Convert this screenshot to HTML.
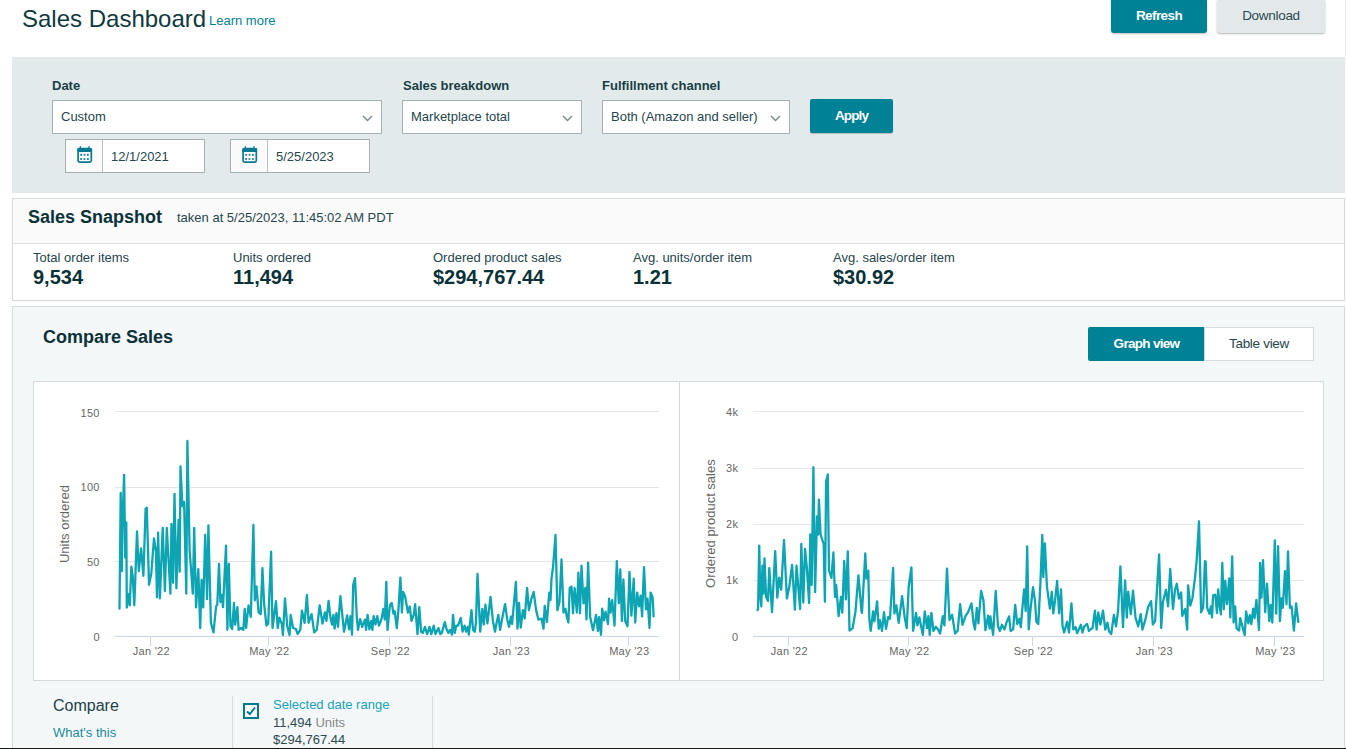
<!DOCTYPE html>
<html><head><meta charset="utf-8">
<style>
*{box-sizing:border-box;margin:0;padding:0}
html,body{width:1346px;height:749px;overflow:hidden;background:#fff;font-family:"Liberation Sans",sans-serif;color:#002F36}
.abs{position:absolute}
.title{left:22px;top:4px;font-size:24px;line-height:30px;color:#0F3A40;white-space:nowrap}
.learn{left:209px;top:13px;font-size:13px;line-height:16px;color:#008296}
.btn{position:absolute;top:0;height:33px;border-radius:0 0 3px 3px;font-size:13.5px;text-align:center;line-height:31px}
.refresh{left:1111px;width:96px;background:#008296;color:#fff;font-weight:bold;letter-spacing:-0.6px;box-shadow:0 1px 2px rgba(0,0,0,.25)}
.download{left:1217px;width:108px;background:#E3E9EA;color:#2D4A4F;letter-spacing:-0.3px;box-shadow:0 1px 2px rgba(0,0,0,.3)}
.rline{left:1345px;top:0;width:1px;height:57px;background:#E8E8E8}
.panel{left:12px;top:57px;width:1333px;height:136px;background:#E3EAEB}
.lbl{position:absolute;font-size:13px;font-weight:bold;line-height:16px;color:#193F45}
.sel{position:absolute;top:100px;height:34px;background:#fff;border:1px solid #A3B1B2;font-size:13px;line-height:32px;padding-left:8px;color:#25464B}
.chev{position:absolute;right:8px;top:14px;width:11px;height:7px}
.date{position:absolute;top:139px;height:34px;width:140px;background:#fff;border:1px solid #A3B1B2;font-size:13px;line-height:32px;color:#25464B}
.date .ic{position:absolute;left:0;top:0;width:37px;height:32px;background:#FAFAFA;border-right:1px solid #B8C3C4}
.date .tx{position:absolute;left:45px;top:1px}
.apply{left:810px;top:99px;width:83px;height:34px;background:#008296;color:#fff;font-weight:bold;font-size:13.5px;letter-spacing:-0.9px;line-height:33px;text-align:center;border-radius:2px;box-shadow:0 1px 1px rgba(0,0,0,.2)}
.snap{left:12px;top:198px;width:1333px;height:103px;border:1px solid #D5DBDB;background:#fff}
.snaphd{position:absolute;left:0;top:0;width:100%;height:45px;background:#FAFAFA;border-bottom:1px solid #DDE2E2}
.sntitle{position:absolute;left:15px;top:7px;font-size:18px;font-weight:bold;line-height:22px;color:#0B3238}
.sntaken{position:absolute;left:164px;top:11px;font-size:13px;line-height:16px;color:#25464B}
.met{position:absolute;top:51px}
.met .k{font-size:13px;line-height:15px;color:#25464B}
.met .v{font-size:20px;font-weight:bold;line-height:24px;color:#0B3238}
.cmp{left:12px;top:306px;width:1333px;height:450px;border:1px solid #D5DBDB;background:#F4F7F8}
.cmptitle{position:absolute;left:30px;top:19px;font-size:18px;font-weight:bold;line-height:22px;color:#0B3238}
.tog{position:absolute;top:20px;height:34px;font-size:13.5px;letter-spacing:-0.3px;line-height:32px;text-align:center}
.charts{position:absolute;left:20px;top:74px;width:1291px;height:300px;background:#fff;border:1px solid #D5DBDB}
.chart{position:absolute;left:0;top:0}
.tl{font-family:"Liberation Sans",sans-serif;font-size:11px;letter-spacing:0.3px;fill:#666}
.ttl{font-family:"Liberation Sans",sans-serif;font-size:13px;fill:#666}
.divv{position:absolute;left:645px;top:0;width:1px;height:298px;background:#D5DBDB}
</style></head><body>
<div class="abs title">Sales Dashboard</div>
<div class="abs learn">Learn more</div>
<div class="btn refresh">Refresh</div>
<div class="btn download">Download</div>
<div class="abs rline"></div>

<div class="abs panel"></div>
<div class="lbl" style="left:52px;top:78px">Date</div>
<div class="lbl" style="left:403px;top:78px">Sales breakdown</div>
<div class="lbl" style="left:602px;top:78px">Fulfillment channel</div>
<div class="sel" style="left:52px;width:330px">Custom<svg class="chev" viewBox="0 0 11 7"><path d="M1 1L5.5 5.5L10 1" stroke="#7F8C8D" stroke-width="1.5" fill="none"/></svg></div>
<div class="sel" style="left:402px;width:180px">Marketplace total<svg class="chev" viewBox="0 0 11 7"><path d="M1 1L5.5 5.5L10 1" stroke="#7F8C8D" stroke-width="1.5" fill="none"/></svg></div>
<div class="sel" style="left:602px;width:188px">Both (Amazon and seller)<svg class="chev" viewBox="0 0 11 7"><path d="M1 1L5.5 5.5L10 1" stroke="#7F8C8D" stroke-width="1.5" fill="none"/></svg></div>
<div class="abs apply">Apply</div>
<div class="date" style="left:65px"><div class="ic"><svg width="16" height="18" viewBox="0 0 16 18" style="position:absolute;left:11px;top:6px"><rect x="1.1" y="2.7" width="13.2" height="13.5" rx="1.6" fill="#fff" stroke="#0A7A92" stroke-width="1.7"/><rect x="0.3" y="1.9" width="14.8" height="4.2" rx="1.2" fill="#0A7A92"/><rect x="2.7" y="0.2" width="1.3" height="2.2" fill="#0A7A92"/><rect x="11.4" y="0.2" width="1.3" height="2.2" fill="#0A7A92"/><g fill="#1C7FA0"><rect x="3.2" y="7.9" width="1.8" height="1.8"/><rect x="6.6" y="7.9" width="1.8" height="1.8"/><rect x="10" y="7.9" width="1.8" height="1.8"/><rect x="3.2" y="12.1" width="1.8" height="1.8"/><rect x="6.6" y="12.1" width="1.8" height="1.8"/><rect x="10" y="12.1" width="1.8" height="1.8"/></g></svg></div><div class="tx">12/1/2021</div></div>
<div class="date" style="left:230px"><div class="ic"><svg width="16" height="18" viewBox="0 0 16 18" style="position:absolute;left:11px;top:6px"><rect x="1.1" y="2.7" width="13.2" height="13.5" rx="1.6" fill="#fff" stroke="#0A7A92" stroke-width="1.7"/><rect x="0.3" y="1.9" width="14.8" height="4.2" rx="1.2" fill="#0A7A92"/><rect x="2.7" y="0.2" width="1.3" height="2.2" fill="#0A7A92"/><rect x="11.4" y="0.2" width="1.3" height="2.2" fill="#0A7A92"/><g fill="#1C7FA0"><rect x="3.2" y="7.9" width="1.8" height="1.8"/><rect x="6.6" y="7.9" width="1.8" height="1.8"/><rect x="10" y="7.9" width="1.8" height="1.8"/><rect x="3.2" y="12.1" width="1.8" height="1.8"/><rect x="6.6" y="12.1" width="1.8" height="1.8"/><rect x="10" y="12.1" width="1.8" height="1.8"/></g></svg></div><div class="tx">5/25/2023</div></div>

<div class="abs snap">
  <div class="snaphd"><div class="sntitle">Sales Snapshot</div><div class="sntaken">taken at 5/25/2023, 11:45:02 AM PDT</div></div>
  <div class="met" style="left:20px"><div class="k">Total order items</div><div class="v">9,534</div></div>
  <div class="met" style="left:220px"><div class="k">Units ordered</div><div class="v">11,494</div></div>
  <div class="met" style="left:420px"><div class="k">Ordered product sales</div><div class="v">$294,767.44</div></div>
  <div class="met" style="left:620px"><div class="k">Avg. units/order item</div><div class="v">1.21</div></div>
  <div class="met" style="left:820px"><div class="k">Avg. sales/order item</div><div class="v">$30.92</div></div>
</div>

<div class="abs cmp">
  <div class="cmptitle">Compare Sales</div>
  <div class="tog" style="left:1075px;width:117px;background:#008296;color:#fff;font-weight:bold;border-radius:2px 0 0 2px;line-height:34px;letter-spacing:-0.7px">Graph view</div>
  <div class="tog" style="left:1191px;width:110px;background:#fff;color:#25464B;border:1px solid #D5DBDB">Table view</div>
  <div class="charts"><div class="divv"></div></div>
</div>
<svg class="chart" width="1346" height="749" viewBox="0 0 1346 749">
<line x1="115" x2="659" y1="411.5" y2="411.5" stroke="#E6E6E6" stroke-width="1"/>
<line x1="115" x2="659" y1="487.5" y2="487.5" stroke="#E6E6E6" stroke-width="1"/>
<line x1="115" x2="659" y1="561.5" y2="561.5" stroke="#E6E6E6" stroke-width="1"/>
<line x1="753" x2="1304" y1="411.5" y2="411.5" stroke="#E6E6E6" stroke-width="1"/>
<line x1="753" x2="1304" y1="468.5" y2="468.5" stroke="#E6E6E6" stroke-width="1"/>
<line x1="753" x2="1304" y1="524.5" y2="524.5" stroke="#E6E6E6" stroke-width="1"/>
<line x1="753" x2="1304" y1="580.5" y2="580.5" stroke="#E6E6E6" stroke-width="1"/>
<line x1="115" x2="659" y1="636.5" y2="636.5" stroke="#CCD6EB" stroke-width="1"/>
<line x1="753" x2="1304" y1="636.5" y2="636.5" stroke="#CCD6EB" stroke-width="1"/>
<line x1="150.5" x2="150.5" y1="636.5" y2="646" stroke="#CCD6EB" stroke-width="1"/>
<text x="151.3" y="655" text-anchor="middle" class="tl">Jan '22</text>
<line x1="268.5" x2="268.5" y1="636.5" y2="646" stroke="#CCD6EB" stroke-width="1"/>
<text x="269.3" y="655" text-anchor="middle" class="tl">May '22</text>
<line x1="389.5" x2="389.5" y1="636.5" y2="646" stroke="#CCD6EB" stroke-width="1"/>
<text x="390.3" y="655" text-anchor="middle" class="tl">Sep '22</text>
<line x1="510.5" x2="510.5" y1="636.5" y2="646" stroke="#CCD6EB" stroke-width="1"/>
<text x="511.3" y="655" text-anchor="middle" class="tl">Jan '23</text>
<line x1="628.5" x2="628.5" y1="636.5" y2="646" stroke="#CCD6EB" stroke-width="1"/>
<text x="629.3" y="655" text-anchor="middle" class="tl">May '23</text>
<line x1="788.5" x2="788.5" y1="636.5" y2="646" stroke="#CCD6EB" stroke-width="1"/>
<text x="789.3" y="655" text-anchor="middle" class="tl">Jan '22</text>
<line x1="908.5" x2="908.5" y1="636.5" y2="646" stroke="#CCD6EB" stroke-width="1"/>
<text x="909.3" y="655" text-anchor="middle" class="tl">May '22</text>
<line x1="1032.5" x2="1032.5" y1="636.5" y2="646" stroke="#CCD6EB" stroke-width="1"/>
<text x="1033.3" y="655" text-anchor="middle" class="tl">Sep '22</text>
<line x1="1153.5" x2="1153.5" y1="636.5" y2="646" stroke="#CCD6EB" stroke-width="1"/>
<text x="1154.3" y="655" text-anchor="middle" class="tl">Jan '23</text>
<line x1="1274.5" x2="1274.5" y1="636.5" y2="646" stroke="#CCD6EB" stroke-width="1"/>
<text x="1275.3" y="655" text-anchor="middle" class="tl">May '23</text>
<text x="99.8" y="416.8" text-anchor="end" class="tl">150</text>
<text x="99.8" y="490.8" text-anchor="end" class="tl">100</text>
<text x="99.8" y="565.8" text-anchor="end" class="tl">50</text>
<text x="99.8" y="641" text-anchor="end" class="tl">0</text>
<text x="738.3" y="415.8" text-anchor="end" class="tl">4k</text>
<text x="738.3" y="471.8" text-anchor="end" class="tl">3k</text>
<text x="738.3" y="527.8" text-anchor="end" class="tl">2k</text>
<text x="738.3" y="583.8" text-anchor="end" class="tl">1k</text>
<text x="738.3" y="641" text-anchor="end" class="tl">0</text>
<text transform="translate(69,524) rotate(-90)" text-anchor="middle" class="ttl">Units ordered</text>
<text transform="translate(714.5,523.6) rotate(-90)" text-anchor="middle" class="ttl">Ordered product  sales</text>
<path d="M119.5 608.7 L120.7 492.9 L121.8 571.2 L122.5 521.3 L124.1 474.8 L125.2 557.6 L126.3 522.4 L126.8 607.5 L128.6 593.9 L129.8 605.3 L131.3 566.7 L132.7 575.8 L134.3 605.3 L137.0 531.5 L138.8 571.2 L141.1 548.5 L143.4 575.8 L145.6 508.8 L146.8 507.7 L149.0 584.8 L151.3 573.5 L154.0 538.3 L155.9 550.8 L157.0 597.3 L158.1 532.6 L159.9 598.4 L162.7 528.0 L164.9 591.0 L166.8 528.0 L170.4 593.7 L171.5 524.0 L173.1 582.8 L174.5 493.8 L176.4 588.3 L178.6 519.8 L179.7 571.8 L180.5 466.5 L182.4 506.2 L184.1 502.0 L186.3 593.7 L187.4 441.0 L189.6 550.0 L192.8 593.7 L194.2 528.0 L196.1 607.4 L198.3 569.1 L200.2 628.0 L201.6 580.0 L203.2 607.4 L205.2 534.9 L207.1 599.2 L208.4 525.3 L210.9 622.8 L213.5 632.4 L216.1 606.4 L217.3 604.6 L219.0 563.8 L220.4 602.0 L221.8 595.0 L223.0 607.2 L226.0 545.6 L227.4 629.8 L228.8 563.8 L230.5 626.3 L232.2 629.0 L234.0 602.9 L235.2 624.6 L237.4 607.2 L238.6 629.8 L240.9 628.0 L243.3 629.8 L244.7 609.0 L246.1 628.0 L248.5 605.5 L250.8 616.8 L253.4 524.8 L254.8 600.3 L256.5 586.4 L258.6 612.4 L260.7 614.2 L262.4 568.2 L264.2 604.6 L266.4 625.5 L268.2 623.7 L271.1 551.7 L272.5 628.0 L276.0 601.1 L277.7 628.0 L279.4 617.6 L282.0 624.6 L282.9 635.0 L285.0 598.5 L287.3 626.3 L289.5 635.0 L290.7 615.0 L293.0 628.0 L295.9 629.0 L297.7 634.0 L300.3 629.8 L302.0 610.7 L304.6 622.8 L306.9 595.0 L308.6 622.8 L311.6 614.2 L314.2 632.4 L316.8 629.8 L319.7 605.5 L322.5 623.7 L324.9 612.4 L326.4 620.9 L328.6 601.0 L330.4 617.3 L332.0 624.5 L333.4 614.9 L334.6 628.7 L336.4 613.1 L338.0 626.9 L340.4 596.2 L344.0 631.7 L347.2 615.5 L349.0 629.3 L350.5 616.1 L352.0 634.7 L353.2 584.8 L355.0 578.2 L356.8 617.3 L358.0 629.9 L360.1 619.1 L362.2 626.9 L364.9 619.7 L366.1 629.9 L367.6 614.9 L369.4 629.3 L371.2 620.9 L372.4 629.9 L373.6 616.1 L375.5 624.5 L377.3 616.1 L379.0 625.7 L381.5 619.1 L383.3 608.9 L384.8 619.7 L386.3 581.8 L387.5 629.9 L389.9 605.3 L391.7 602.9 L393.5 613.7 L394.7 611.3 L396.8 628.1 L398.5 608.9 L400.4 577.6 L401.9 612.5 L403.1 592.0 L405.2 596.8 L407.9 612.5 L409.7 606.5 L411.5 620.9 L413.9 614.3 L415.1 604.1 L417.5 634.1 L419.3 607.1 L421.1 631.7 L422.9 632.9 L424.9 626.9 L427.1 634.1 L429.5 626.9 L431.3 634.1 L433.7 625.7 L435.5 634.1 L438.5 628.1 L440.3 634.1 L441.8 632.9 L444.8 622.1 L446.6 629.3 L448.4 632.9 L450.2 629.9 L452.0 634.7 L453.0 614.9 L454.7 632.9 L456.2 625.7 L458.0 625.7 L460.7 617.9 L462.6 631.7 L464.6 625.7 L466.2 631.7 L467.9 626.9 L468.8 634.7 L471.5 610.1 L473.0 629.9 L474.8 631.7 L476.0 622.1 L477.5 574.0 L480.2 631.7 L482.3 608.9 L483.8 624.5 L485.4 604.7 L487.4 623.3 L490.5 596.8 L492.9 620.9 L495.0 631.7 L496.5 623.3 L498.3 614.9 L500.1 629.9 L502.2 618.5 L505.1 604.1 L507.3 619.7 L509.1 626.9 L510.9 616.7 L512.1 623.9 L515.9 581.8 L517.5 628.7 L519.0 602.9 L520.7 627.5 L522.9 610.1 L524.7 618.5 L527.1 587.8 L528.9 610.1 L531.3 599.2 L533.7 592.0 L536.1 610.1 L538.5 619.7 L541.5 618.5 L543.5 628.7 L544.7 605.9 L546.9 622.1 L549.3 592.6 L550.5 600.0 L551.5 578.7 L553.1 566.5 L555.5 535.0 L557.4 610.2 L559.5 601.8 L561.5 559.5 L563.5 612.5 L565.4 608.7 L566.9 617.1 L568.4 622.5 L569.7 588.0 L571.5 586.4 L573.0 613.3 L574.6 588.0 L576.9 612.5 L578.4 572.6 L580.0 613.3 L581.5 565.7 L583.5 603.3 L585.3 588.0 L586.5 619.4 L588.1 562.6 L590.2 617.1 L593.0 630.2 L596.1 614.8 L597.9 631.0 L599.1 617.1 L601.0 634.8 L602.2 608.7 L604.0 620.2 L605.6 611.7 L608.0 624.0 L609.1 598.7 L610.6 612.5 L612.2 600.2 L614.5 625.6 L616.8 561.1 L618.8 603.3 L620.3 569.5 L621.9 621.0 L623.4 579.5 L625.2 621.0 L627.5 626.3 L629.5 571.8 L631.4 615.6 L633.7 578.7 L635.2 622.5 L637.2 592.6 L639.1 606.4 L640.6 595.6 L642.1 616.4 L644.0 567.2 L646.0 609.4 L647.5 598.7 L649.5 627.9 L650.6 592.6 L652.6 597.2 L653.6 616.4" fill="none" stroke="#0DA4B4" stroke-width="2.3" stroke-linejoin="round" stroke-linecap="round"/>
<path d="M757.5 610.0 L758.1 608.9 L759.2 545.6 L760.3 595.3 L761.3 606.5 L762.4 565.7 L763.5 593.7 L764.5 558.4 L766.1 596.9 L768.0 600.9 L769.3 568.1 L772.0 612.1 L775.2 551.2 L777.3 597.7 L779.2 577.7 L781.2 589.7 L784.0 540.0 L786.9 598.5 L789.2 587.3 L792.1 564.9 L794.9 609.7 L796.5 565.7 L800.1 608.9 L801.3 544.0 L803.3 602.5 L805.0 548.9 L806.9 568.1 L809.1 603.0 L810.3 534.5 L811.7 585.0 L813.4 467.2 L815.1 592.2 L817.0 516.5 L818.2 534.5 L818.9 499.7 L820.6 534.5 L823.7 544.1 L824.9 601.8 L826.1 481.6 L827.8 474.4 L829.0 570.5 L831.4 577.8 L833.4 552.5 L835.0 597.0 L836.2 585.0 L838.6 616.2 L841.0 597.0 L842.3 612.6 L844.2 561.0 L845.9 599.4 L847.8 551.3 L849.5 630.6 L852.6 628.2 L855.5 611.4 L858.4 575.4 L861.5 611.4 L862.0 612.8 L863.3 589.4 L865.3 553.4 L866.4 578.7 L868.3 570.7 L869.3 618.8 L870.7 630.8 L873.1 611.4 L874.4 621.4 L877.1 601.4 L878.7 628.8 L880.0 620.1 L882.0 630.8 L884.0 612.1 L886.0 628.8 L888.3 616.8 L890.0 618.8 L893.1 568.0 L894.4 613.4 L896.3 605.4 L898.7 622.8 L902.1 596.1 L904.7 617.4 L906.7 628.1 L908.7 586.7 L911.4 567.4 L913.1 630.8 L916.1 612.8 L917.4 625.4 L919.4 617.4 L922.8 634.8 L924.8 611.4 L927.0 628.1 L928.4 616.1 L929.7 634.8 L931.4 612.8 L933.4 630.8 L935.8 626.8 L938.1 629.5 L940.1 633.5 L942.8 616.1 L944.4 625.4 L947.0 568.7 L949.5 620.1 L952.1 614.8 L955.1 633.5 L957.7 630.8 L960.1 604.1 L962.5 624.8 L965.5 616.1 L968.1 612.1 L971.5 603.4 L973.5 622.8 L975.0 629.4 L976.8 607.9 L978.4 623.3 L981.1 591.0 L983.4 600.2 L985.4 630.2 L988.1 615.6 L989.6 628.6 L990.4 616.4 L993.1 634.8 L995.7 591.0 L998.0 626.3 L999.9 631.0 L1001.9 624.8 L1004.5 629.4 L1006.5 622.5 L1009.1 616.4 L1010.6 631.0 L1013.1 629.4 L1015.2 604.8 L1017.2 624.0 L1019.5 618.7 L1020.8 627.1 L1021.8 614.8 L1024.1 589.5 L1025.7 611.0 L1027.2 546.5 L1028.7 629.4 L1030.6 608.7 L1033.0 587.2 L1034.9 600.2 L1036.4 621.7 L1038.3 624.0 L1040.3 585.6 L1042.3 535.0 L1043.3 577.2 L1044.9 543.4 L1046.9 586.4 L1049.9 608.7 L1051.8 591.8 L1053.3 613.3 L1055.1 600.2 L1057.1 581.0 L1059.1 613.3 L1061.0 589.5 L1062.5 625.6 L1064.1 632.5 L1067.1 621.7 L1069.0 632.5 L1071.4 603.3 L1073.3 629.4 L1075.6 627.1 L1077.1 633.2 L1080.9 624.8 L1082.5 632.5 L1084.3 626.3 L1087.1 624.0 L1088.9 631.0 L1090.0 629.7 L1092.6 628.0 L1094.9 610.7 L1096.6 629.7 L1098.3 612.4 L1100.4 624.5 L1103.0 610.7 L1105.3 629.7 L1107.4 622.8 L1109.1 631.5 L1111.2 634.1 L1113.9 615.0 L1116.0 626.3 L1118.1 610.7 L1120.4 566.4 L1123.0 627.1 L1125.1 580.3 L1126.8 617.6 L1128.2 591.6 L1130.8 614.1 L1133.0 590.7 L1135.5 617.6 L1138.2 626.3 L1140.7 614.1 L1142.4 629.7 L1145.2 620.2 L1148.1 607.2 L1151.1 601.1 L1152.8 624.5 L1155.1 621.1 L1159.1 554.3 L1161.2 628.0 L1162.9 602.0 L1166.0 589.8 L1168.1 606.3 L1170.2 569.0 L1173.0 608.9 L1175.0 589.8 L1176.8 583.8 L1178.9 598.5 L1181.1 592.4 L1182.3 615.9 L1185.1 608.9 L1187.2 629.7 L1188.1 585.5 L1190.3 605.5 L1192.4 598.5 L1195.0 577.7 L1196.7 560.3 L1199.0 521.3 L1201.1 612.4 L1203.2 607.2 L1204.9 561.2 L1205.7 561.6 L1207.2 607.8 L1209.4 613.7 L1210.9 606.4 L1212.0 617.4 L1213.1 595.4 L1215.3 594.6 L1217.0 613.0 L1218.2 589.5 L1219.7 606.4 L1220.9 614.4 L1222.3 563.0 L1223.8 609.3 L1225.3 580.7 L1227.0 604.2 L1229.2 578.5 L1230.3 617.4 L1232.2 556.4 L1233.6 622.5 L1235.1 606.4 L1236.6 628.4 L1239.1 630.6 L1240.2 618.1 L1242.5 626.9 L1244.7 635.0 L1246.1 611.5 L1248.3 623.3 L1249.8 615.2 L1251.3 624.0 L1253.2 608.6 L1254.6 618.1 L1256.4 599.8 L1259.0 629.9 L1260.1 563.0 L1261.5 597.6 L1263.0 560.1 L1265.2 612.2 L1267.0 583.6 L1269.3 621.1 L1270.8 604.9 L1272.3 622.5 L1274.8 540.3 L1276.2 613.7 L1278.1 546.2 L1279.9 621.1 L1281.4 598.3 L1282.8 607.8 L1285.0 571.1 L1286.5 604.2 L1288.0 551.3 L1289.9 607.8 L1291.6 606.4 L1293.9 630.6 L1296.1 603.4 L1298.3 621.8" fill="none" stroke="#0DA4B4" stroke-width="2.3" stroke-linejoin="round" stroke-linecap="round"/>
</svg>
<div class="abs" style="left:53px;top:696px;font-size:16px;line-height:20px;color:#1D4248">Compare</div>
<div class="abs" style="left:53px;top:724.5px;font-size:13px;line-height:16px;color:#1C8A9B">What's this</div>
<div class="abs" style="left:232px;top:696px;width:1px;height:53px;background:#D5DBDB"></div>
<div class="abs" style="left:432px;top:696px;width:1px;height:53px;background:#D5DBDB"></div>
<div class="abs" style="left:243px;top:703px;width:16px;height:16px;border:2px solid #007A8C;background:#fff"><svg width="12" height="12" viewBox="0 0 12 12" style="position:absolute;left:0;top:0"><path d="M2 6.5L4.8 9L10 2.5" stroke="#007A8C" stroke-width="2" fill="none"/></svg></div>
<div class="abs" style="left:273px;top:696px;font-size:13px;line-height:17.5px;color:#17A2B5;white-space:nowrap">Selected date range<br><span style="color:#2B4A50">11,494</span> <span style="color:#888">Units</span><br><span style="color:#2B4A50">$294,767.44</span></div>
<div class="abs" style="left:0;top:748px;width:1346px;height:1px;background:#1A1A1A"></div>
</body></html>
